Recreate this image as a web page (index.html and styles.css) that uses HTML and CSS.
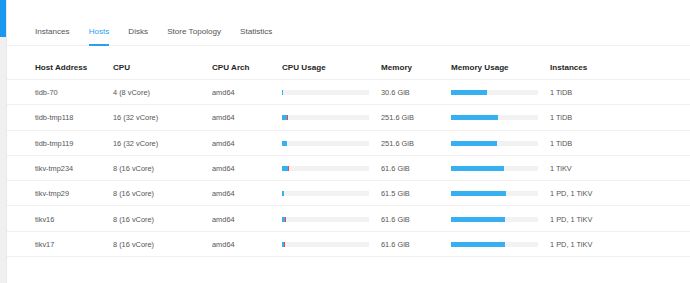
FILE: index.html
```html
<!DOCTYPE html>
<html lang="en">
<head>
    <meta charset="UTF-8">
    <meta name="viewport" content="width=device-width, initial-scale=1.0">
    <title>Cluster Info - Hosts</title>
    <link rel="stylesheet" href="styles.css">
</head>
<body>
<div class="layout">
    <div class="side">
        <div class="side-thumb"></div>
    </div>

    <div class="main">
        <div class="tabs">
            <div class="tab">Instances</div>
            <div class="tab active">Hosts</div>
            <div class="tab">Disks</div>
            <div class="tab">Store Topology</div>
            <div class="tab">Statistics</div>
        </div>

        <div class="table">
            <div class="row head">
                <div>Host Address</div>
                <div>CPU</div>
                <div>CPU Arch</div>
                <div>CPU Usage</div>
                <div>Memory</div>
                <div>Memory Usage</div>
                <div>Instances</div>
            </div>

            <div class="row">
                <div>tidb-70</div>
                <div>4 (8 vCore)</div>
                <div>amd64</div>
                <div><div class="track"><span class="fill" style="width:1px"></span></div></div>
                <div>30.6 GiB</div>
                <div><div class="track"><span class="fill" style="width:36px"></span></div></div>
                <div>1 TiDB</div>
            </div>

            <div class="row">
                <div>tidb-tmp118</div>
                <div>16 (32 vCore)</div>
                <div>amd64</div>
                <div><div class="track"><span class="fill" style="width:5px"></span><span class="sys" style="width:1px"></span></div></div>
                <div>251.6 GiB</div>
                <div><div class="track"><span class="fill" style="width:47px"></span></div></div>
                <div>1 TiDB</div>
            </div>

            <div class="row">
                <div>tidb-tmp119</div>
                <div>16 (32 vCore)</div>
                <div>amd64</div>
                <div><div class="track"><span class="fill" style="width:5px"></span></div></div>
                <div>251.6 GiB</div>
                <div><div class="track"><span class="fill" style="width:46px"></span></div></div>
                <div>1 TiDB</div>
            </div>

            <div class="row">
                <div>tikv-tmp234</div>
                <div>8 (16 vCore)</div>
                <div>amd64</div>
                <div><div class="track"><span class="fill" style="width:6px"></span><span class="sys" style="width:1px"></span></div></div>
                <div>61.6 GiB</div>
                <div><div class="track"><span class="fill" style="width:53px"></span></div></div>
                <div>1 TiKV</div>
            </div>

            <div class="row">
                <div>tikv-tmp29</div>
                <div>8 (16 vCore)</div>
                <div>amd64</div>
                <div><div class="track"><span class="fill" style="width:2px"></span></div></div>
                <div>61.5 GiB</div>
                <div><div class="track"><span class="fill" style="width:55px"></span></div></div>
                <div>1 PD, 1 TiKV</div>
            </div>

            <div class="row">
                <div>tikv16</div>
                <div>8 (16 vCore)</div>
                <div>amd64</div>
                <div><div class="track"><span class="fill" style="width:3px"></span><span class="sys" style="width:1px"></span></div></div>
                <div>61.6 GiB</div>
                <div><div class="track"><span class="fill" style="width:54px"></span></div></div>
                <div>1 PD, 1 TiKV</div>
            </div>

            <div class="row">
                <div>tikv17</div>
                <div>8 (16 vCore)</div>
                <div>amd64</div>
                <div><div class="track"><span class="fill" style="width:2px"></span><span class="sys" style="width:1px"></span></div></div>
                <div>61.6 GiB</div>
                <div><div class="track"><span class="fill" style="width:54px"></span></div></div>
                <div>1 PD, 1 TiKV</div>
            </div>
        </div>
    </div>
</div>
</body>
</html>
```

FILE: styles.css
```css
* {
    margin: 0;
    padding: 0;
    box-sizing: border-box;
}
body {
    font-family: "Liberation Sans", Arial, sans-serif;
    background-color: #ffffff;
    color: #555555;
}
.layout {
    display: flex;
    height: 283px;
}
.side {
    width: 7px;
    background-color: #f0f0f0;
    border-right: 1px solid #e8e8e8;
}
.side-thumb {
    height: 37px;
    background-color: #1a97ee;
}
.main {
    flex: 1;
}
.tabs {
    display: flex;
    align-items: flex-end;
    gap: 19px;
    height: 46px;
    padding-left: 28px;
    border-bottom: 1px solid #f0f0f0;
}
.tab {
    font-size: 8.1px;
    line-height: 12px;
    padding-bottom: 6px;
    margin-bottom: -1px;
    border-bottom: 2px solid transparent;
    color: #555555;
}
.tab.active {
    color: #2a9ff0;
    border-bottom-color: #2a9ff0;
}
.row {
    display: grid;
    grid-template-columns: 78px 99px 70px 99px 70px 99px 1fr;
    align-items: center;
    padding-left: 28px;
    height: 25.3px;
    padding-top: 1px;
    font-size: 7.4px;
    border-bottom: 1px solid #f0f0f0;
}
.row.head {
    height: 34px;
    padding-top: 10px;
    font-size: 8.1px;
    font-weight: bold;
    color: #262626;
}
.track {
    display: flex;
    width: 87px;
    height: 5px;
    background-color: #f2f2f2;
}
.fill {
    display: block;
    height: 100%;
    background-color: #36b0f0;
}
.sys {
    display: block;
    height: 100%;
    background-color: #f04848;
}
```
